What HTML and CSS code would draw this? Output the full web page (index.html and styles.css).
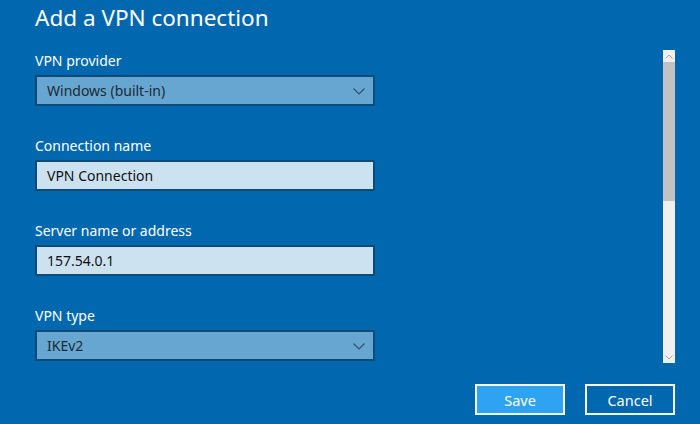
FILE: index.html
```html
<!DOCTYPE html>
<html lang="en">
<head>
<meta charset="utf-8">
<title>Add a VPN connection</title>
<link rel="stylesheet" href="styles.css">
</head>
<body>
<div class="page">
  <header class="header">
    <h1 class="title">Add a VPN connection</h1>
  </header>
  <main class="main">
    <form class="form">
      <div class="group">
        <label class="label">VPN provider</label>
        <div class="field select">
          <span class="value">Windows (built-in)</span>
          <svg class="chev" width="12" height="7" viewBox="0 0 12 7"><path d="M0.5 0.5 L6 6 L11.5 0.5" fill="none" stroke="#2f4f68" stroke-width="1.1"/></svg>
        </div>
      </div>
      <div class="group">
        <label class="label">Connection name</label>
        <div class="field text"><span class="value">VPN Connection</span></div>
      </div>
      <div class="group">
        <label class="label">Server name or address</label>
        <div class="field text"><span class="value">157.54.0.1</span></div>
      </div>
      <div class="group">
        <label class="label">VPN type</label>
        <div class="field select">
          <span class="value">IKEv2</span>
          <svg class="chev" width="12" height="7" viewBox="0 0 12 7"><path d="M0.5 0.5 L6 6 L11.5 0.5" fill="none" stroke="#2f4f68" stroke-width="1.1"/></svg>
        </div>
      </div>
    </form>
    <div class="scrollbar">
      <div class="sb-arrow"><svg width="8" height="5" viewBox="0 0 8 5"><path d="M0.5 4.5 L4 1 L7.5 4.5" fill="none" stroke="#a8a8a8" stroke-width="1"/></svg></div>
      <div class="sb-thumb"></div>
      <div class="sb-track"></div>
      <div class="sb-arrow"><svg width="8" height="5" viewBox="0 0 8 5"><path d="M0.5 0.5 L4 4 L7.5 0.5" fill="none" stroke="#a8a8a8" stroke-width="1"/></svg></div>
    </div>
  </main>
  <footer class="footer">
    <button class="btn primary" type="button">Save</button>
    <button class="btn" type="button">Cancel</button>
  </footer>
</div>
</body>
</html>
```
FILE: styles.css
```css
* { box-sizing: border-box; }
html, body { margin: 0; padding: 0; }
body {
  width: 700px;
  height: 424px;
  overflow: hidden;
  background: #0168b0;
  font-family: "Noto Sans", "Open Sans", sans-serif;
  color: #ffffff;
}
.page {
  display: flex;
  flex-direction: column;
  height: 424px;
}
.header {
  height: 50px;
  padding: 4px 0 0 35px;
}
.title {
  margin: 0;
  font-size: 22.5px;
  line-height: 28px;
  font-weight: 400;
}
.main {
  display: flex;
  padding: 0 25px 0 35px;
  height: 313px;
}
.form {
  width: 340px;
  display: flex;
  flex-direction: column;
  gap: 29px;
}
.group {
  display: flex;
  flex-direction: column;
  gap: 4px;
}
.label {
  font-size: 14px;
  line-height: 20px;
  height: 21px;
  padding-top: 1px;
}
.field {
  height: 31px;
  border: 2px solid #0e4c78;
  display: flex;
  align-items: center;
  padding: 0 8px 0 10px;
  font-size: 14px;
  color: #111;
}
.field.select {
  background: #66a6d0;
  justify-content: space-between;
  color: #1c2a36;
}
.field.text {
  background: #cce2f1;
}
.chev { display: block; margin-top: 1px; }
.scrollbar {
  margin-left: auto;
  width: 12px;
  display: flex;
  flex-direction: column;
  background: #f0f0f0;
}
.sb-arrow {
  height: 12px;
  display: flex;
  align-items: center;
  justify-content: center;
}
.sb-thumb {
  height: 139px;
  background: #c2c2c2;
}
.sb-track { flex: 1; }
.footer {
  display: flex;
  justify-content: flex-end;
  gap: 20px;
  padding: 21px 25px 0 0;
}
.btn {
  width: 90px;
  height: 31px;
  border: 2px solid #f2f6fa;
  background: transparent;
  color: #ffffff;
  font-family: "Noto Sans", "Open Sans", sans-serif;
  font-size: 14.5px;
  padding: 0;
}
.btn.primary {
  background: #2ea3f2;
}
```
